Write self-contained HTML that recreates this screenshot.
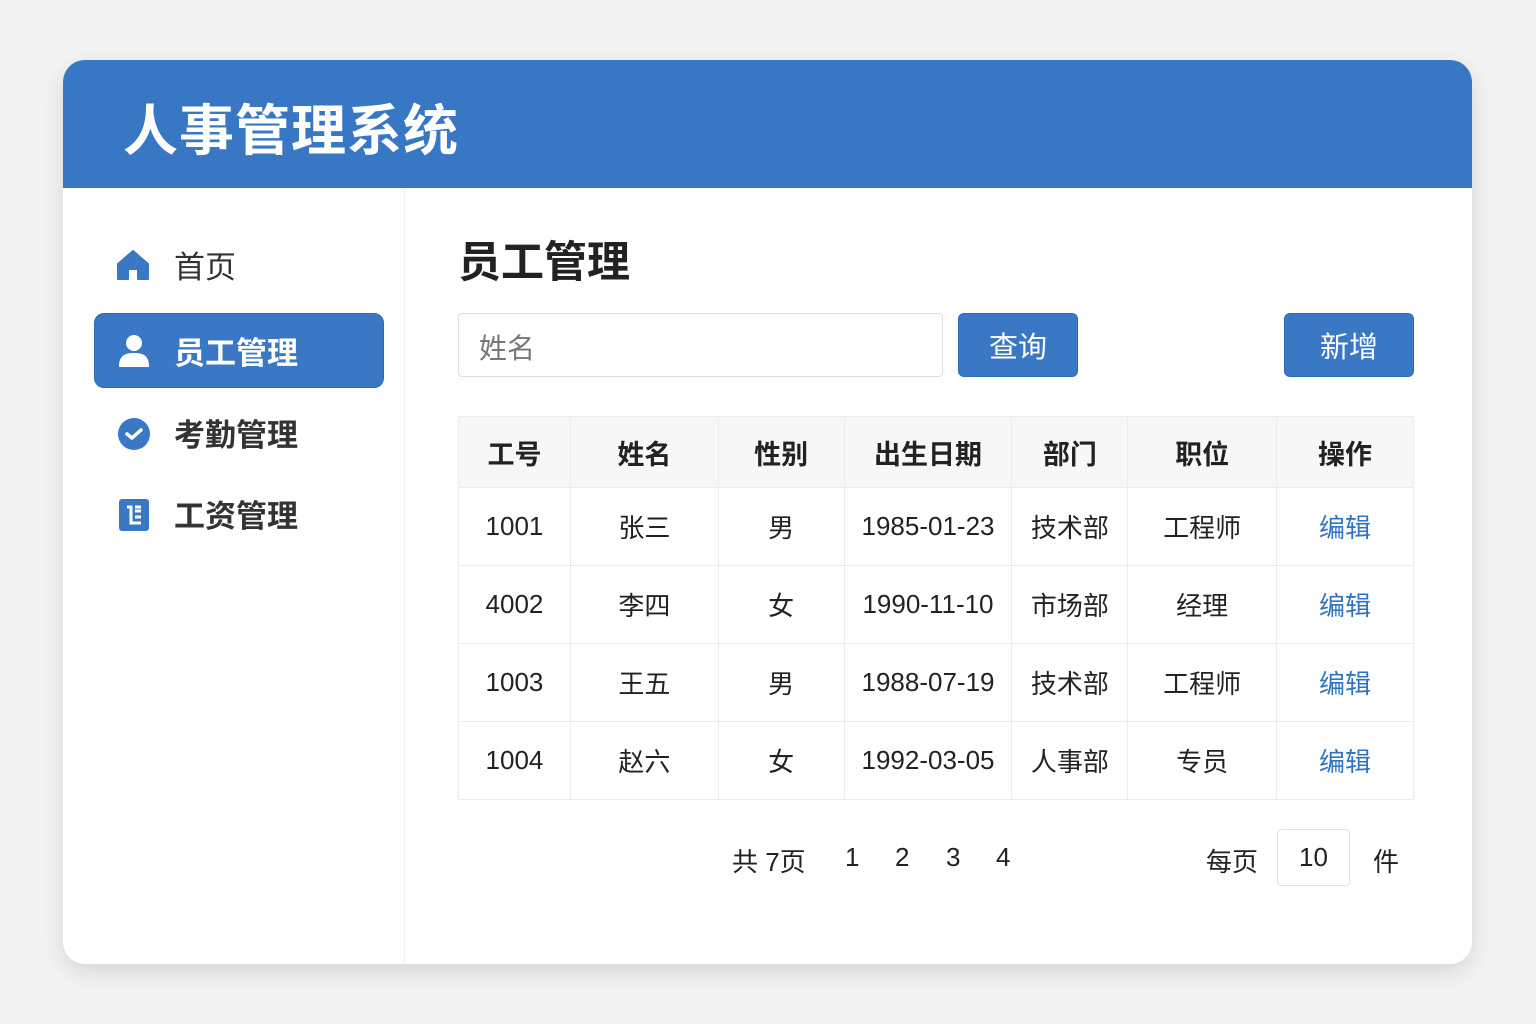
<!DOCTYPE html>
<html><head><meta charset="utf-8"><style>
*{margin:0;padding:0;box-sizing:border-box}
body{width:1536px;height:1024px;background:#f3f3f4;font-family:"Liberation Sans","Noto Sans CJK SC",sans-serif;color:#222;position:relative;overflow:hidden}
.card{position:absolute;left:63px;top:60px;width:1409px;height:904px;background:#fff;border-radius:22px;overflow:hidden;box-shadow:0 8px 24px rgba(0,0,0,.12)}
.hdr{position:absolute;left:0;top:0;width:100%;height:128px;background:#3877c4}
.hdr span{position:absolute;left:60px;top:26px;font-size:55px;font-weight:bold;color:#fff;letter-spacing:1px}
.side{position:absolute;left:0;top:128px;width:342px;height:776px;border-right:1px solid #eee}
.a{position:absolute;font-size:31px;color:#333}
.item{position:absolute;left:31px;width:290px;height:75px}
.act{background:#3a78c6;border-radius:10px;border:1px solid #2f69b3}
.abs{position:absolute}
.btn{position:absolute;background:#3a78c6;color:#fff;border-radius:6px;font-size:29px;display:flex;align-items:center;justify-content:center;border:1px solid #2f69b3}
table{position:absolute;left:458px;top:416px;width:956px;border-collapse:collapse;border:1px solid #e4e4e4;font-size:26px;text-align:center}
td,th{border:1px solid #ececec;height:78px}
th{height:71px;background:#f7f7f7;font-weight:bold;font-size:27px;color:#222}
td.l{color:#2f74c4}
.p{position:absolute;top:842px;font-size:26px;color:#222}
</style></head><body>
<div class="card">
<div class="hdr"><span>人事管理系统</span></div>
<div class="side"></div>
</div>
<svg class="abs" style="left:117px;top:250px" width="32" height="30" viewBox="0 0 32 30"><path d="M16 1 L31 14 V29 H21 V19 H11 V29 H1 V14 Z" fill="#3a78c6" stroke="#3a78c6" stroke-linejoin="round" stroke-width="2"/></svg>
<div class="a" style="left:174px;top:242px">首页</div>
<div class="item act" style="left:94px;top:313px"></div>
<svg class="abs" style="left:118px;top:334px" width="32" height="34" viewBox="0 0 32 34"><circle cx="16" cy="9" r="8" fill="#fff"/><path d="M1 33 C1 22 6 19 16 19 C26 19 31 22 31 33 Z" fill="#fff"/></svg>
<div class="a" style="left:174px;top:328px;color:#fff;font-weight:bold">员工管理</div>
<svg class="abs" style="left:117px;top:417px" width="34" height="34" viewBox="0 0 34 34"><circle cx="17" cy="17" r="16" fill="#3a78c6"/><path d="M10 17 L15 21 L24 13" stroke="#fff" stroke-width="3.5" fill="none" stroke-linecap="round" stroke-linejoin="round"/></svg>
<div class="a" style="left:174px;top:410px;font-weight:bold;color:#333">考勤管理</div>
<svg class="abs" style="left:119px;top:499px" width="30" height="32" viewBox="0 0 30 32"><rect x="0" y="0" width="30" height="32" rx="3" fill="#3a78c6"/><path d="M8 8 H12 V24 H22 M16 12 H22 M16 18 H22 M16 8 H22" stroke="#fff" stroke-width="3" fill="none"/></svg>
<div class="a" style="left:174px;top:491px;font-weight:bold;color:#333">工资管理</div>
<div class="abs" style="left:458px;top:228px;font-size:43px;font-weight:bold;color:#222">员工管理</div>
<div class="abs" style="left:458px;top:313px;width:485px;height:64px;border:1px solid #ddd;border-radius:4px;font-size:28px;color:#777;padding:13px 20px">姓名</div>
<div class="btn" style="left:958px;top:313px;width:120px;height:64px">查询</div>
<div class="btn" style="left:1284px;top:313px;width:130px;height:64px">新增</div>
<table>
<colgroup><col style="width:112px"><col style="width:148px"><col style="width:126px"><col style="width:168px"><col style="width:116px"><col style="width:149px"><col style="width:137px"></colgroup>
<tr><th>工号</th><th>姓名</th><th>性别</th><th>出生日期</th><th>部门</th><th>职位</th><th>操作</th></tr>
<tr><td>1001</td><td>张三</td><td>男</td><td>1985-01-23</td><td>技术部</td><td>工程师</td><td class="l">编辑</td></tr>
<tr><td>4002</td><td>李四</td><td>女</td><td>1990-11-10</td><td>市场部</td><td>经理</td><td class="l">编辑</td></tr>
<tr><td>1003</td><td>王五</td><td>男</td><td>1988-07-19</td><td>技术部</td><td>工程师</td><td class="l">编辑</td></tr>
<tr><td>1004</td><td>赵六</td><td>女</td><td>1992-03-05</td><td>人事部</td><td>专员</td><td class="l">编辑</td></tr>
</table>
<div class="p" style="left:732px">共 7页</div>
<div class="p" style="left:845px">1</div>
<div class="p" style="left:895px">2</div>
<div class="p" style="left:946px">3</div>
<div class="p" style="left:996px">4</div>
<div class="p" style="left:1206px">每页</div>
<div class="abs" style="left:1277px;top:829px;width:73px;height:57px;border:1px solid #e2e2e2;border-radius:4px;font-size:26px;text-align:center;line-height:55px">10</div>
<div class="p" style="left:1373px">件</div>
</body></html>
